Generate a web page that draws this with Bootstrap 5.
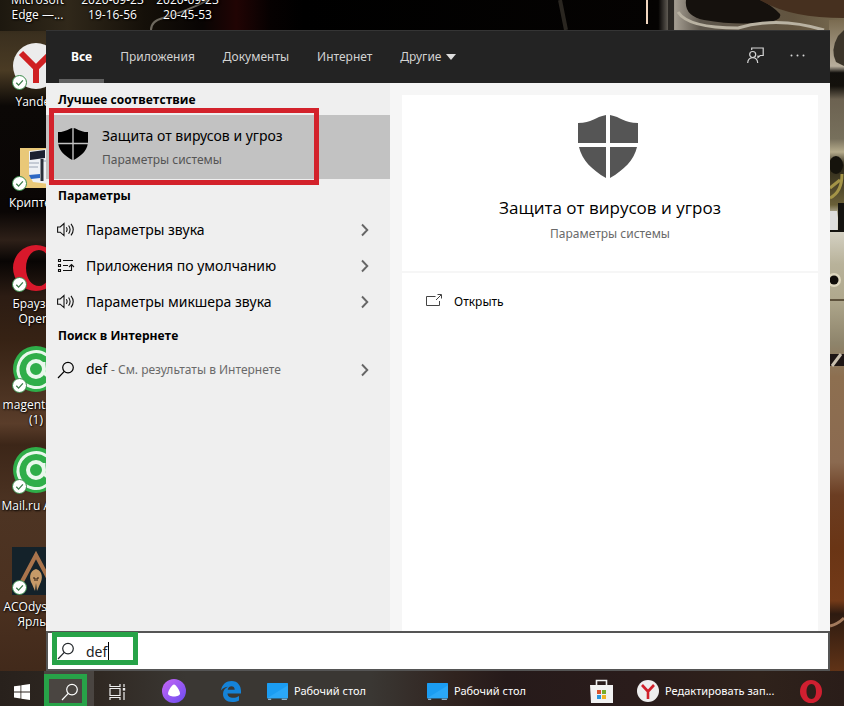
<!DOCTYPE html>
<html lang="ru">
<head>
<meta charset="utf-8">
<meta name="viewport" content="width=device-width, initial-scale=1">
<title>Поиск</title>
<link href="https://cdn.jsdelivr.net/npm/bootstrap@5.3.0/dist/css/bootstrap.min.css" rel="stylesheet">
<style>
  body { font-family: "Noto Sans", "Open Sans", sans-serif; font-size: 14px; line-height: 20px; background: #0b0806; }
  button { font: inherit; color: inherit; }
  .wallpaper { z-index: 0; }
  .shortcuts { z-index: 1; color: #fff; font-family: "Open Sans", sans-serif; font-size: 12px; line-height: 15px; text-shadow: 1px 1px 2px #000, 0 0 2px #000; }
  .shortcuts a { color: inherit; white-space: nowrap; }
  .shortcuts-side { top: 42px; left: 0; width: 72px; }
  .shortcuts-side li { height: 101px; }
  .shortcuts-top { top: -8px; left: 0; }
  .shortcuts-top li { width: 75px; }
  .shortcut-pic { width: 48px; height: 48px; }
  .tick { left: 0; bottom: 0; }

  .search-window { z-index: 2; margin: 30px 14px 0 46px; background: #f6f6f6; }
  .tabs-bar { height: 53px; background: #232323; border-top: 1px solid #343434; color: #d2d2d2; font-size: 12px; padding-left: 13px; gap: 4px; }
  .tab-btn { background: none; border: 0; border-bottom: 4px solid transparent; border-top: 4px solid transparent; padding: 0 12px; white-space: nowrap; }
  .tab-btn.active { color: #fff; font-weight: 700; border-bottom-color: #616161; }
  .tool-btn { background: none; border: 0; width: 42px; padding: 0; }

  .results { flex: 0 1 344px; background: #efefef; color: #000; }
  .section-title { font-family: "Open Sans", sans-serif; font-size: 12px; font-weight: 700; line-height: 30px; padding: 2px 0 0 12px; margin: 0; }
  .best-row { height: 64px; background: #c2c2c2; border: 0; padding: 2px 12px 0 11px; gap: 13px; }
  .result-row { height: 36px; background: none; border: 0; padding: 1px 21px 0 11px; gap: 11px; }
  .subtle { color: #6a6a6a; font-size: 12px; }
  .best-row .subtle { color: #555; }
  .red-frame { left: 3px; top: -7px; width: 270px; height: 77px; border: 5px solid #d3222b; }

  .preview { margin: 12px 12px 0 12px; }
  .preview-head { background: #fff; height: 176px; padding: 20px 4px 0 0; }
  .preview-title { font-family: "Open Sans", sans-serif; font-size: 17px; line-height: 24px; margin: 18px 0 4px 4px; color: #000; font-weight: 400; }
  .preview-head .subtle { margin-left: 4px; }
  .preview-actions { background: #fff; margin-top: 2px; padding-top: 16px; }
  .open-btn { background: none; border: 0; height: 26px; padding: 0 24px; gap: 12px; font-size: 12px; color: #000; }

  .search-box { height: 40px; background: #fff; border: 2px solid #555; }
  .search-box label { padding-left: 9px; }
  .search-box input { border: 0; outline: 0; padding: 0 0 0 11px; font-size: 14px; color: #222; min-width: 0; }
  .green-frame { border: 5px solid #27a348; }
  .green-input { left: 4px; top: -1px; width: 86px; height: 33px; }
  .text-caret { left: 60px; top: 9px; width: 1px; height: 19px; background: #000; }

  .taskbar { z-index: 3; height: 35px; background: linear-gradient(90deg, #28211c 0, #302923 12%, #3a3733 22%, #3a3733 44%, #30231f 54%, #261a1a 60%, #2a1c1b 75%, #2f221b 90%, #2a1d19 100%); color: #fff; font-size: 11px; }
  .task-btn { height: 40px; border: 0; background: none; padding: 0; width: 50px; flex: none; }
  .task-btn.compact { width: 44px; }
  .task-btn.medium { width: 48px; }
  .task-btn.roomy { width: 64px; }
  .task-btn.wide { width: 160px; flex: 0 1 160px; padding-left: 11px; gap: 6px; white-space: nowrap; overflow: hidden; }
  .task-btn.pressed { width: 50px; padding-left: 2px; background: #4a4541; }
  .green-task { left: 0; top: 3px; width: 43px; height: 34px; }
</style>
<script src="https://cdn.jsdelivr.net/npm/bootstrap@5.3.0/dist/js/bootstrap.bundle.min.js"></script>
</head>
<body class="m-0 vh-100 d-flex flex-column overflow-hidden position-relative">

<svg width="0" height="0" class="position-absolute" aria-hidden="true">
  <defs>
    <symbol id="shield" viewBox="0 0 60 63">
      <path d="M28 0v28H0V8c14 0 17-6 28-8zM32 0v28h28V8c-14 0-17-6-28-8zM1 32h27v31C14 55 4 45 1 32zM59 32H32v31c14-8 24-18 27-31z"/>
    </symbol>
    <symbol id="shield-small" viewBox="0 0 30 32">
      <path d="M14.300 0v14.800H0V4c7 .3 9-2.500 14.300-4zM15.700 0v14.800H30V4c-7 .3-9-2.500-14.300-4zM.3 16.200h14v15.800C7 28 1.500 23 .3 16.200zM29.700 16.200h-14v15.800C23 28 28.500 23 29.700 16.200z"/>
    </symbol>
    <symbol id="speaker" viewBox="0 0 18 16">
      <path d="M.6 5h2.600L7 1.600v12L3.200 10.200H.6z M9.300 5.300q1.600 2.300 0 4.600M11.600 3.500q3 4.100 0 8.200M14 1.800q4.500 5.800 0 11.600" fill="none" stroke="#111" stroke-width="1.100"/>
    </symbol>
    <symbol id="chevron" viewBox="0 0 8 14"><path d="M1 1.500l5.300 5.500L1 12.500" fill="none" stroke="#666" stroke-width="1.900"/></symbol>
    <symbol id="lens" viewBox="0 0 18 18"><path d="M1 17l6.300-6.600" fill="none" stroke="currentColor" stroke-width="1.200"/><circle cx="11" cy="6.600" r="5.300" fill="none" stroke="currentColor" stroke-width="1.200"/></symbol>
    <symbol id="tick" viewBox="0 0 15 15"><circle cx="7.500" cy="7.500" r="7" fill="#fff" stroke="#3a8a4a"/><path d="M4.300 7.800l2.300 2.300 4.300-4.700" fill="none" stroke="#3a7a48" stroke-width="1.300"/></symbol>
    <symbol id="agent" viewBox="0 0 48 48">
      <circle cx="24" cy="24" r="23" fill="#2fae49"/>
      <path d="M36 38A18 18 0 1 1 42 24v2q-1 5-5 5t-5-5v-9" fill="none" stroke="#e9f8ec" stroke-width="3"/>
      <circle cx="24" cy="24" r="8" fill="none" stroke="#e9f8ec" stroke-width="4"/>
    </symbol>
    <symbol id="desk" viewBox="0 0 20 16"><rect width="20" height="14.500" rx=".5" fill="#1b9df3"/><path d="M0 14.500L20 2v12.500z" fill="#2ba8f8"/><path d="M1 15.300h3M14 15.300h5" stroke="#a8d8f8"/></symbol>
  </defs>
</svg>

<svg class="wallpaper position-absolute top-0 start-0 w-100 h-100" viewBox="0 0 844 706" preserveAspectRatio="none" aria-hidden="true">
  <defs>
    <linearGradient id="leftSide" x1="0" y1="0" x2="0" y2="1">
      <stop offset="0" stop-color="#1c170e"/><stop offset=".05" stop-color="#3b301f"/><stop offset=".1" stop-color="#4a3b24"/><stop offset=".15" stop-color="#0b0806"/>
      <stop offset=".3" stop-color="#0a0605"/><stop offset=".34" stop-color="#2e2018"/><stop offset=".37" stop-color="#080504"/><stop offset=".42" stop-color="#2c1c13"/>
      <stop offset=".48" stop-color="#362214"/><stop offset=".56" stop-color="#4c3322"/><stop offset=".6" stop-color="#5a3d2a"/><stop offset=".63" stop-color="#3c2618"/>
      <stop offset=".72" stop-color="#4d3423"/><stop offset=".85" stop-color="#4b3120"/><stop offset="1" stop-color="#3d2618"/>
    </linearGradient>
    <linearGradient id="topSide">
      <stop offset="0" stop-color="#1d180f"/><stop offset=".08" stop-color="#30281a"/><stop offset=".17" stop-color="#151009"/><stop offset=".24" stop-color="#080403"/>
      <stop offset=".28" stop-color="#210404"/><stop offset=".32" stop-color="#060101"/><stop offset=".36" stop-color="#000"/><stop offset=".78" stop-color="#050302"/>
      <stop offset=".8" stop-color="#a39c90"/><stop offset=".83" stop-color="#5d564c"/><stop offset=".94" stop-color="#62543f"/><stop offset="1" stop-color="#776a50"/>
    </linearGradient>
    <linearGradient id="rightSide" x1="0" y1="0" x2="0" y2="1">
      <stop offset="0" stop-color="#7a6b50"/><stop offset=".07" stop-color="#b8ae9c"/><stop offset=".08" stop-color="#12100d"/><stop offset=".1" stop-color="#14110c"/><stop offset=".12" stop-color="#6c6251"/><stop offset=".18" stop-color="#77705c"/>
      <stop offset=".2" stop-color="#b6ac8c"/><stop offset=".22" stop-color="#2c2719"/><stop offset=".28" stop-color="#6a6038"/><stop offset=".3" stop-color="#e0ded4"/>
      <stop offset=".37" stop-color="#b8b29a"/><stop offset=".42" stop-color="#b0a98e"/><stop offset=".49" stop-color="#8e846b"/><stop offset=".54" stop-color="#8d6f50"/>
      <stop offset=".67" stop-color="#8b6a50"/><stop offset=".72" stop-color="#6b3d22"/><stop offset=".8" stop-color="#6a3515"/><stop offset=".88" stop-color="#733a18"/><stop offset=".9" stop-color="#2d1a10"/><stop offset="1" stop-color="#683718"/>
    </linearGradient>
  </defs>
  <rect width="844" height="706" fill="#0b0806"/>
  <rect width="60" height="706" fill="url(#leftSide)"/>
  <rect width="844" height="31" fill="url(#topSide)"/>
  <path d="M151 30q0-9 12-12Q190 10 208 0" fill="none" stroke="#6d685e" stroke-width="2"/>
  <path d="M560 0l6 30" stroke="#2a2620" stroke-width="4"/>
  <path d="M647 0v24" stroke="#f1d7c0" stroke-width="2"/>
  <path d="M668 0h6v30h-6z" fill="#2b2824"/>
  <path d="M686 0q-2 16 18 20 34 6 64 2 14-2 12-8Q770 4 760 0z" fill="#15110d"/>
  <path d="M678 12q10 16 60 16 40-12 86 2" fill="none" stroke="#b9b2a2" stroke-width="3"/>
  <path d="M760 0q30 18 84 18V0z" fill="#46301f"/>
  <rect x="829" y="20" width="15" height="660" fill="url(#rightSide)"/>
  <path d="M838 36q-8 14-2 26l8 4V30z" fill="#3b3429"/>
  <ellipse cx="836" cy="165" rx="7" ry="9" fill="#15130c"/>
  <path d="M830 198q12-6 12-24M830 188l10-8" fill="none" stroke="#a39447" stroke-width="3"/>
  <path d="M830 211h7v20h-7z" fill="#ddd"/><path d="M838 203h6v29h-14v-2h8z" fill="#14130f"/>
  <circle cx="834" cy="280" r="7" fill="#ddd6bd"/><circle cx="834" cy="280" r="4.500" fill="#0f0c08"/>
  <path d="M830 300h14" stroke="#5e533d" stroke-width="2"/>
  <path d="M830 354h14v12h-14z" fill="#1d1514"/><path d="M832 366l9-12" stroke="#c9bfae" stroke-width="3"/>
  <path d="M830 626q8-2 14-8" stroke="#a47a5c" stroke-width="3" fill="none"/>
</svg>

<ul class="shortcuts shortcuts-top list-unstyled d-flex text-center position-absolute m-0">
  <li><a href="#" class="text-decoration-none">Microsoft<br>Edge —...</a></li>
  <li><a href="#" class="text-decoration-none">2020-09-23<br>19-16-56</a></li>
  <li><a href="#" class="text-decoration-none">2020-09-23<br>20-45-53</a></li>
</ul>

<ul class="shortcuts shortcuts-side list-unstyled position-absolute m-0">
  <li><a href="#" class="d-flex flex-column align-items-center text-decoration-none"><span class="shortcut-pic position-relative mb-1">
    <svg width="48" height="48" viewBox="0 0 48 48"><circle cx="24" cy="24" r="23" fill="#ececec"/><path d="M9 11l15 15M39 11L24 26v15" fill="none" stroke="#cf2022" stroke-width="6"/></svg>
    <svg class="tick position-absolute" width="15" height="15"><use href="#tick"/></svg></span>Yandex</a></li>
  <li><a href="#" class="d-flex flex-column align-items-center text-decoration-none"><span class="shortcut-pic position-relative mb-1">
    <svg width="48" height="48" viewBox="0 0 48 48"><path d="M8 5h36v40H8z" fill="#e9c878"/><path d="M17 8l28-3v37l-24-3-4-8z" fill="#eef1f5"/><path d="M18 9l15-2v8l-15 2z" fill="#1b2030"/><path d="M17 20h10M17 24h9M31 18h8" stroke="#9aa4b4"/><path d="M17 32l11-1v4l-9 1z" fill="#2d68c4"/><path d="M30 16v22" stroke="#2a2f3a" stroke-width="3"/></svg>
    <svg class="tick position-absolute" width="15" height="15"><use href="#tick"/></svg></span>Криптекс</a></li>
  <li><a href="#" class="d-flex flex-column align-items-center text-decoration-none"><span class="shortcut-pic position-relative mb-1">
    <svg width="48" height="48" viewBox="0 0 48 48"><path fill-rule="evenodd" d="M24 1a23 23 0 1 0 0 46 23 23 0 1 0 0-46zM27 6c7 0 11 8 11 18s-4 18-11 18-13-7-13-18S20 6 27 6z" fill="#d8182b"/></svg>
    <svg class="tick position-absolute" width="15" height="15"><use href="#tick"/></svg></span><span class="text-center">Браузер<br>Opera</span></a></li>
  <li><a href="#" class="d-flex flex-column align-items-center text-decoration-none"><span class="shortcut-pic position-relative mb-1">
    <svg width="48" height="48"><use href="#agent"/></svg>
    <svg class="tick position-absolute" width="15" height="15"><use href="#tick"/></svg></span><span class="text-center">magentsetu<br>(1)</span></a></li>
  <li><a href="#" class="d-flex flex-column align-items-center text-decoration-none"><span class="shortcut-pic position-relative mb-1">
    <svg width="48" height="48"><use href="#agent"/></svg>
    <svg class="tick position-absolute" width="15" height="15"><use href="#tick"/></svg></span>Mail.ru Аген</a></li>
  <li><a href="#" class="d-flex flex-column align-items-center text-decoration-none"><span class="shortcut-pic position-relative mb-1">
    <svg width="48" height="48" viewBox="0 0 48 48"><path d="M0 0h48v48H0z" fill="#14222a"/><path d="M6 42L24 8l18 34" fill="none" stroke="#a9744c" stroke-width="4"/><path d="M24 22c-7 2-7 10-4 15l3 7 1-8 1 8 3-7c3-5 3-13-4-15z" fill="#c69a68"/><path d="M21 31h2v3M27 31h-2v3" stroke="#2a1a12" fill="none"/></svg>
    <svg class="tick position-absolute" width="15" height="15"><use href="#tick"/></svg></span><span class="text-center">ACOdyssey.<br>Ярлык</span></a></li>
</ul>

<main class="search-window position-relative flex-grow-1 d-flex flex-column">
  <nav class="tabs-bar d-flex align-items-stretch flex-shrink-0">
    <button class="tab-btn active">Все</button>
    <button class="tab-btn">Приложения</button>
    <button class="tab-btn">Документы</button>
    <button class="tab-btn">Интернет</button>
    <button class="tab-btn d-flex align-items-center">Другие
      <svg class="ms-1" width="12" height="6" viewBox="0 0 12 6"><path d="M1 0h10L6 6z" fill="#ddd"/></svg></button>
    <div class="ms-auto d-flex pe-2 me-1">
      <button class="tool-btn pb-1" aria-label="Отзыв"><svg width="17" height="17" viewBox="0 0 17 17" fill="none" stroke="#d6d6d6" stroke-width="1.200"><circle cx="5.700" cy="7.500" r="3"/><path d="M.7 16c.3-7 9.700-7 10 0M4.700 3V1h11.500v7.500h-3l-2.200 2v-2"/></svg></button>
      <button class="tool-btn pb-1" aria-label="Ещё"><svg width="15" height="3" viewBox="0 0 15 3" fill="#d6d6d6"><circle cx="1.500" cy="1.500" r="1"/><circle cx="7.500" cy="1.500" r="1"/><circle cx="13.500" cy="1.500" r="1"/></svg></button>
    </div>
  </nav>

  <div class="flex-grow-1 d-flex">
    <section class="results">
      <h2 class="section-title">Лучшее соответствие</h2>
      <button class="best-row w-100 d-flex align-items-center text-start position-relative">
        <svg class="flex-shrink-0 mb-2" width="32" height="32"><use href="#shield-small"/></svg>
        <span><span class="d-block mb-1">Защита от вирусов и угроз</span><span class="subtle d-block">Параметры системы</span></span>
        <span class="red-frame position-absolute"></span>
      </button>
      <h2 class="section-title">Параметры</h2>
      <button class="result-row w-100 d-flex align-items-center text-start">
        <svg class="flex-shrink-0" width="18" height="16"><use href="#speaker"/></svg><span>Параметры звука</span>
        <svg class="ms-auto" width="8" height="14"><use href="#chevron"/></svg></button>
      <button class="result-row w-100 d-flex align-items-center text-start">
        <svg class="flex-shrink-0" width="18" height="16" viewBox="0 0 18 16" fill="none" stroke="#111" stroke-width="1.100"><path d="M1.500 1.500h2v2h-2zM1.500 6.500h2v2h-2zM1.500 11.500h2v2h-2zM6 2.500h10M6 7.500h5M6 12.500h9M14.500 13V6.500M12 9l2.500-2.500L17 9"/></svg><span>Приложения по умолчанию</span>
        <svg class="ms-auto" width="8" height="14"><use href="#chevron"/></svg></button>
      <button class="result-row w-100 d-flex align-items-center text-start">
        <svg class="flex-shrink-0" width="18" height="16"><use href="#speaker"/></svg><span>Параметры микшера звука</span>
        <svg class="ms-auto" width="8" height="14"><use href="#chevron"/></svg></button>
      <h2 class="section-title">Поиск в Интернете</h2>
      <button class="result-row w-100 d-flex align-items-center text-start">
        <svg class="flex-shrink-0" width="18" height="18"><use href="#lens"/></svg><span>def <span class="subtle">- См. результаты в Интернете</span></span>
        <svg class="ms-auto" width="8" height="14"><use href="#chevron"/></svg></button>
    </section>

    <section class="preview flex-grow-1 d-flex flex-column">
      <div class="preview-head text-center">
        <svg class="d-block mx-auto" width="60" height="63" fill="#555"><use href="#shield"/></svg>
        <h1 class="preview-title">Защита от вирусов и угроз</h1>
        <div class="subtle">Параметры системы</div>
      </div>
      <div class="preview-actions flex-grow-1">
        <button class="open-btn d-flex align-items-center">
          <svg class="mb-1" width="16" height="13" viewBox="0 0 16 13" fill="none" stroke="#444"><path d="M9.500 2.500H.5v9h13V7M10 6l5-5M11.500.5h4v4"/></svg>Открыть</button>
      </div>
    </section>
  </div>

  <form class="search-box d-flex align-items-center position-relative flex-shrink-0">
    <label for="query" aria-label="Поиск" class="d-flex"><svg width="18" height="18"><use href="#lens"/></svg></label>
    <input id="query" type="text" value="def" class="flex-grow-1 h-100" autocomplete="off">
    <span class="text-caret position-absolute"></span>
    <span class="green-frame green-input position-absolute"></span>
  </form>
</main>

<footer class="taskbar position-relative d-flex flex-shrink-0 overflow-hidden">
  <button class="task-btn compact" aria-label="Пуск"><svg width="16" height="16" viewBox="0 0 16 16" fill="#fff"><path d="M0 2.300l6.500-.9v6.100H0zM7.300 1.300L16 0v7.500H7.300zM0 8.400h6.500v6.100L0 13.600zM7.300 8.400H16V16l-8.700-1.300z"/></svg></button>
  <button class="task-btn pressed position-relative" aria-label="Поиск"><svg width="18" height="18"><use href="#lens"/></svg><span class="green-frame green-task position-absolute"></span></button>
  <button class="task-btn medium" aria-label="Представление задач"><svg width="18" height="16" viewBox="0 0 18 16" fill="none" stroke="#eee" stroke-width="1.200"><path d="M1 0v2.500h10V0M1 16v-2.500h10V16M1 4.500h10v7H1zM15 0v3M15 8v8"/><path d="M13.800 4h2.400v2.600h-2.400z" fill="#eee" stroke="none"/></svg></button>
  <button class="task-btn roomy" aria-label="Алиса"><svg width="24" height="24" viewBox="0 0 24 24"><defs><linearGradient id="alice" x1="0" y1="0" x2="1" y2="1"><stop stop-color="#c766f5"/><stop offset="1" stop-color="#6a4cf0"/></linearGradient></defs><circle cx="12" cy="12" r="12" fill="url(#alice)"/><path d="M12 5.500c2 0 6 6.500 6 9 0 2-3 3-6 3s-6-1-6-3c0-2.500 4-9 6-9z" fill="#fff"/></svg></button>
  <button class="task-btn" aria-label="Edge"><svg width="20" height="21" viewBox="0 0 20 21"><path d="M0 9.500C1 3 5.500 0 10.500 0 17 0 20 5 20 10v2.500H6.500c.3 5 7 5.500 11.500 2.500v4.500c-2 1-4.500 1.500-7 1.500C5.500 21 2 17.500 2 13c0-3.500 2-6 5-7.200C4.500 6 2 7 0 9.500zM6.700 8.700h7c0-4.700-6.300-4.500-7 0z" fill="#1583d8" fill-rule="evenodd"/></svg></button>
  <button class="task-btn wide d-flex align-items-center"><svg width="21" height="17"><use href="#desk"/></svg>Рабочий стол</button>
  <button class="task-btn wide d-flex align-items-center"><svg width="21" height="17"><use href="#desk"/></svg>Рабочий стол</button>
  <button class="task-btn" aria-label="Магазин"><svg width="23" height="24" viewBox="0 0 23 24"><path d="M6.500 7V1.500h10V7" fill="none" stroke="#eee" stroke-width="1.600"/><path d="M0 6h23v18H1z" fill="#f2f2f2"/><path d="M7 11h4v4H7z" fill="#d9532c"/><path d="M12 11h4v4h-4z" fill="#79ad28"/><path d="M7 16h4v4H7z" fill="#2b96dc"/><path d="M12 16h4v4h-4z" fill="#efb422"/></svg></button>
  <button class="task-btn wide d-flex align-items-center"><svg class="flex-shrink-0" width="22" height="22" viewBox="0 0 22 22"><circle cx="11" cy="11" r="11" fill="#eee"/><path d="M5 5l6 6.500L17 5M11 11v8" fill="none" stroke="#d0202a" stroke-width="2.600"/></svg>Редактировать зап...</button>
  <button class="task-btn" aria-label="Opera"><svg width="22" height="23" viewBox="0 0 22 23"><path fill-rule="evenodd" d="M11 0a11 11.500 0 1 0 0 23 11 11.500 0 1 0 0-23zM11.500 4c3 0 4.500 3 4.500 7.500S14.500 19 11.500 19 6.500 16 6.500 11.500 8.500 4 11.500 4z" fill="#d01f30"/></svg></button>
</footer>
</body>
</html>
